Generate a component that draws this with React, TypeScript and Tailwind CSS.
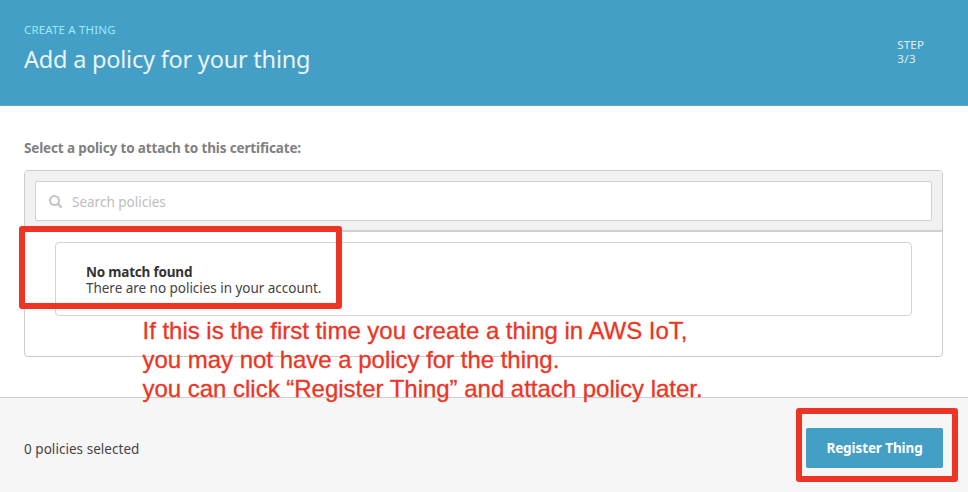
function SearchIcon() {
  return (
    <svg viewBox="0 0 13 13" className="size-[13px] shrink-0 text-[#c4c4c4]" fill="none" stroke="currentColor" aria-hidden="true">
      <circle cx="5.5" cy="5.5" r="4.5" strokeWidth="2" />
      <path d="M9 9l2.9 2.9" strokeWidth="2.2" strokeLinecap="round" />
    </svg>
  );
}

function Header() {
  return (
    <header className="flex h-[106px] justify-between border-b border-[#55abcf] bg-[#449fc6] pl-6 pr-11">
      <div className="pt-[22px]">
        <p className="whitespace-nowrap text-[11.5px] leading-4 tracking-[0.17px] text-[#9aebff]">CREATE A THING</p>
        <h1 className="mt-[3px] whitespace-nowrap text-[23.5px] leading-9 tracking-[-0.22px] text-[#eaf3f7]">Add a policy for your thing</h1>
      </div>
      <div className="pt-[38px] text-[11.5px] leading-[14px] tracking-[0.15px] text-[#e0eff6]">
        <p>STEP</p>
        <p className="tracking-[0.4px]">3/3</p>
      </div>
    </header>
  );
}

function PolicyPicker() {
  return (
    <main className="h-[291px] pl-6 pr-[25px] pt-8">
      <h2 className="whitespace-nowrap text-[13.5px] font-bold leading-5 tracking-[-0.14px] text-[#808080]">
        Select a policy to attach to this certificate:
      </h2>
      <section className="mt-3 h-[187px] rounded border border-[#ccc]">
        <div className="h-[61px] rounded-t-[3px] border-b-2 border-[#d0d0d0] bg-[#f1f1f1] p-2.5">
          <div className="flex h-10 items-center rounded-[2px] border border-[#d0d0d0] bg-white pl-[13px]">
            <SearchIcon />
            <span className="ml-[10px] pt-0.5 text-[13.5px] text-[#bdbdbd]">Search policies</span>
          </div>
        </div>
        <div className="mx-[30px] mt-[10px] h-[74px] rounded border border-[#d3d3d3] pl-[30px] pt-[21px] text-[13.5px] leading-4 text-[#444]">
          <p className="font-bold tracking-[-0.2px] text-[#333]">No match found</p>
          <p className="tracking-[-0.03px]">There are no policies in your account.</p>
        </div>
      </section>
    </main>
  );
}

function Footer() {
  return (
    <footer className="flex h-[95px] items-center justify-between border-t border-[#ccc] bg-[#f6f6f6] pb-px pl-6 pr-[25px] pt-[7px]">
      <span className="pt-0.5 text-[13.5px] tracking-[0.04px] text-[#444]">0 policies selected</span>
      <button className="h-10 w-[137px] rounded-[2px] bg-[#449fc6] text-[13.5px] font-bold tracking-[-0.1px] text-white">Register Thing</button>
    </footer>
  );
}

export default function App() {
  return (
    <div className="relative flex h-[492px] w-[968px] flex-col overflow-hidden bg-white font-['Noto_Sans',sans-serif]">
      <Header />
      <PolicyPicker />
      <Footer />
      <div className="absolute left-[19px] top-[226px] h-[83px] w-[323px] rounded-[3px] border-[6px] border-[#ee3424]" />
      <div className="absolute left-[796px] top-[408px] h-[74px] w-[162px] rounded-[3px] border-[6px] border-[#ee3424]" />
      <div className="absolute left-[142.5px] top-[316px] whitespace-nowrap font-['Liberation_Sans',Arial,sans-serif] text-[24px] leading-[29px] tracking-[-0.02px] text-[#ee3424] [-webkit-text-stroke:0.3px_#ee3424]">
        <p>If this is the first time you create a thing in AWS IoT,</p>
        <p>you may not have a policy for the thing.</p>
        <p>you can click “Register Thing” and attach policy later.</p>
      </div>
    </div>
  );
}
